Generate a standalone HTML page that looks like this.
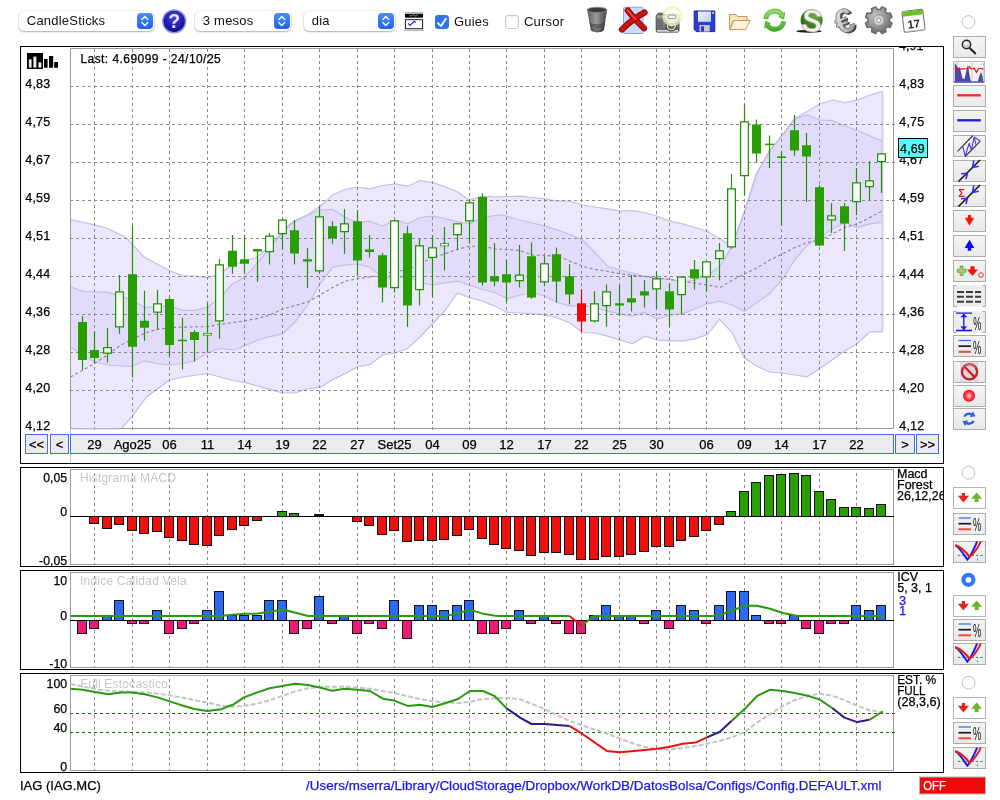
<!DOCTYPE html>
<html><head><meta charset="utf-8"><title>IAG (IAG.MC)</title>
<style>
html,body{margin:0;padding:0;background:#fff;}
body{width:1000px;height:800px;position:relative;overflow:hidden;font-family:'Liberation Sans', sans-serif;}
svg{position:absolute;left:0;top:0;}
body>svg,body>div{will-change:transform;}
.ax{font-family:'Liberation Sans', sans-serif;font-size:12.5px;fill:#000;stroke:#000;stroke-width:.25px;}
.ttl{font-family:'Liberation Sans', sans-serif;font-size:12px;fill:#c6c6c6;}
.sm{font-family:'Liberation Sans', sans-serif;font-size:12.3px;fill:#000;stroke:#000;stroke-width:.25px;}

.sel{position:absolute;top:11px;height:20px;background:#fff;border-radius:5px;box-shadow:0 0 0 .5px rgba(0,0,0,.12),0 1px 2px rgba(0,0,0,.28);font-size:13px;line-height:20px;color:#111;box-sizing:border-box;padding-left:7.8px;letter-spacing:.22px;white-space:nowrap}
.sel i{position:absolute;right:1.5px;top:2px;width:15.5px;height:16px;border-radius:4px;background:linear-gradient(#4a8cf8,#1e62ee)}
.sel i svg{position:absolute;left:0;top:0}
.lbl{position:absolute;top:13px;letter-spacing:.2px;font-size:13px;line-height:18px;color:#111;white-space:nowrap}
.cb{position:absolute;top:15px;width:14px;height:14px;border-radius:3.2px;box-sizing:border-box}
.cb.on{background:#2f73f6}
.cb.off{background:#fff;border:1px solid #c4c4c4;box-shadow:inset 0 1px 1px rgba(0,0,0,.06)}

</style></head><body>
<svg width="1000" height="800" viewBox="0 0 1000 800">
<rect x="20.5" y="46.5" width="923" height="417" fill="#fff" stroke="#000" stroke-width="1"/>
<defs><clipPath id="cp"><rect x="70" y="48" width="824" height="381"/></clipPath><clipPath id="cpanel"><rect x="21" y="47" width="922" height="416"/></clipPath><clipPath id="cpanel2"><rect x="21" y="467" width="922" height="320"/></clipPath></defs>
<g clip-path="url(#cp)">
<polygon points="70.5,219.5 94.5,224.8 108.0,228.5 126.0,237.5 144.0,257.0 157.0,264.0 169.5,270.5 183.0,275.8 195.0,276.0 207.5,277.7 220.0,273.6 232.5,265.0 240.0,262.5 256.2,257.5 265.0,250.0 273.8,241.2 282.5,232.5 290.0,223.8 297.5,219.4 307.5,215.0 320.0,206.2 327.5,200.0 332.5,195.0 345.0,189.5 357.5,187.0 370.0,188.8 382.5,185.5 395.0,183.8 407.5,186.2 420.0,180.5 432.5,182.5 444.5,186.5 457.0,191.5 469.5,200.0 482.5,196.2 495.0,197.0 507.0,196.5 520.0,196.2 532.0,197.5 545.0,198.8 557.5,201.2 570.0,201.2 582.5,205.0 595.0,207.0 607.5,208.8 620.0,211.2 632.0,210.5 645.0,212.5 657.5,216.2 670.0,221.2 682.5,223.8 695.0,227.5 707.5,231.2 719.5,238.8 732.0,246.0 744.6,211.0 756.3,173.9 769.0,151.6 781.7,135.6 794.5,118.8 807.5,111.2 820.0,103.8 832.5,100.0 845.0,102.5 857.5,100.0 870.0,95.0 882.5,91.2 882.5,331.8 870.0,331.8 857.0,343.8 844.5,351.2 832.0,360.0 819.5,368.8 807.0,376.8 794.5,375.0 782.0,373.0 769.5,372.0 757.0,366.2 744.5,358.0 732.0,332.5 719.5,319.2 707.5,334.5 695.0,338.8 682.5,340.8 670.0,340.8 657.5,340.0 645.0,336.2 632.5,343.8 620.0,340.0 607.5,336.2 595.0,333.0 582.5,332.5 570.0,323.0 557.5,318.0 545.0,315.0 532.5,313.8 520.0,313.0 507.5,312.5 495.0,306.2 482.5,301.2 469.5,297.5 457.5,293.0 444.5,311.0 432.4,324.0 420.0,337.0 407.6,348.6 395.0,353.0 382.4,355.0 370.0,364.6 358.0,366.6 345.0,373.6 332.0,380.0 320.0,387.4 307.0,389.0 295.0,393.0 282.4,393.0 270.0,389.4 257.0,386.0 245.0,382.4 232.5,380.5 220.0,377.0 207.0,373.5 183.0,377.0 169.5,380.0 147.0,396.5 132.0,416.6 121.5,428.5 70.5,428.5" fill="#ece7fd"/>
<polygon points="70.5,287.0 84.0,291.5 108.0,292.4 120.0,295.4 138.0,303.5 145.0,307.5 157.0,306.5 169.5,305.6 183.0,310.4 195.0,310.4 207.0,307.4 220.0,298.0 232.5,283.8 240.0,280.0 247.5,273.8 252.5,268.8 265.0,253.8 280.0,236.2 290.0,225.0 297.5,220.0 310.0,213.8 320.0,210.0 332.5,209.4 340.0,213.8 345.0,217.5 357.5,222.5 370.0,221.2 382.5,226.2 395.0,220.0 407.5,223.8 420.0,217.5 432.5,216.2 444.5,218.5 457.0,221.5 469.5,223.8 482.5,217.5 495.0,215.5 502.5,215.0 520.0,220.0 532.5,223.0 545.0,226.2 557.5,230.0 570.0,234.5 582.5,240.0 595.0,252.5 607.5,266.2 620.0,270.0 632.0,273.0 645.0,276.2 657.5,278.0 670.0,279.5 682.5,282.0 695.0,280.0 707.5,275.0 720.0,266.2 732.0,246.5 744.6,211.5 756.3,174.5 769.0,152.2 781.7,136.2 794.5,119.2 807.5,115.0 820.0,120.0 832.5,120.7 845.0,126.0 857.5,130.5 870.0,136.0 882.5,141.2 882.5,222.5 870.0,223.8 857.5,227.5 845.0,222.5 832.5,228.8 820.0,237.5 807.5,245.0 795.0,259.5 782.0,280.0 769.5,293.8 757.0,302.5 744.5,311.2 732.0,305.0 719.5,301.2 707.5,303.8 695.0,308.8 682.5,313.8 670.0,315.0 657.5,318.8 643.8,312.5 632.5,316.2 620.0,313.8 607.5,311.2 595.0,307.0 582.5,306.2 570.0,306.2 557.5,302.5 545.0,296.2 532.5,292.5 520.0,295.0 507.5,298.8 495.0,292.5 482.5,289.5 469.5,285.0 457.5,281.2 444.5,283.0 432.5,285.0 420.0,282.5 407.5,276.0 395.0,280.0 382.5,277.5 370.0,267.5 357.5,263.8 345.0,265.0 332.5,267.5 320.0,283.8 307.0,306.0 295.0,322.0 282.4,334.0 270.0,336.6 258.0,340.0 245.0,345.6 235.0,350.0 220.0,348.5 207.0,353.0 195.0,360.5 183.0,363.5 169.5,365.0 156.0,363.5 144.0,361.0 132.0,366.5 108.0,365.0 94.5,362.0 82.5,354.5 70.5,347.0" fill="#e3dbfb"/>
<polyline points="70.5,219.5 94.5,224.8 108.0,228.5 126.0,237.5 144.0,257.0 157.0,264.0 169.5,270.5 183.0,275.8 195.0,276.0 207.5,277.7 220.0,273.6 232.5,265.0 240.0,262.5 256.2,257.5 265.0,250.0 273.8,241.2 282.5,232.5 290.0,223.8 297.5,219.4 307.5,215.0 320.0,206.2 327.5,200.0 332.5,195.0 345.0,189.5 357.5,187.0 370.0,188.8 382.5,185.5 395.0,183.8 407.5,186.2 420.0,180.5 432.5,182.5 444.5,186.5 457.0,191.5 469.5,200.0 482.5,196.2 495.0,197.0 507.0,196.5 520.0,196.2 532.0,197.5 545.0,198.8 557.5,201.2 570.0,201.2 582.5,205.0 595.0,207.0 607.5,208.8 620.0,211.2 632.0,210.5 645.0,212.5 657.5,216.2 670.0,221.2 682.5,223.8 695.0,227.5 707.5,231.2 719.5,238.8 732.0,246.0 744.6,211.0 756.3,173.9 769.0,151.6 781.7,135.6 794.5,118.8 807.5,111.2 820.0,103.8 832.5,100.0 845.0,102.5 857.5,100.0 870.0,95.0 882.5,91.2" fill="none" stroke="#c3bce8" stroke-width="1.200"/>
<polyline points="70.5,428.5 121.5,428.5 132.0,416.6 147.0,396.5 169.5,380.0 183.0,377.0 207.0,373.5 220.0,377.0 232.5,380.5 245.0,382.4 257.0,386.0 270.0,389.4 282.4,393.0 295.0,393.0 307.0,389.0 320.0,387.4 332.0,380.0 345.0,373.6 358.0,366.6 370.0,364.6 382.4,355.0 395.0,353.0 407.6,348.6 420.0,337.0 432.4,324.0 444.5,311.0 457.5,293.0 469.5,297.5 482.5,301.2 495.0,306.2 507.5,312.5 520.0,313.0 532.5,313.8 545.0,315.0 557.5,318.0 570.0,323.0 582.5,332.5 595.0,333.0 607.5,336.2 620.0,340.0 632.5,343.8 645.0,336.2 657.5,340.0 670.0,340.8 682.5,340.8 695.0,338.8 707.5,334.5 719.5,319.2 732.0,332.5 744.5,358.0 757.0,366.2 769.5,372.0 782.0,373.0 794.5,375.0 807.0,376.8 819.5,368.8 832.0,360.0 844.5,351.2 857.0,343.8 870.0,331.8 882.5,331.8" fill="none" stroke="#c3bce8" stroke-width="1.200"/>
<polyline points="70.5,287.0 84.0,291.5 108.0,292.4 120.0,295.4 138.0,303.5 145.0,307.5 157.0,306.5 169.5,305.6 183.0,310.4 195.0,310.4 207.0,307.4 220.0,298.0 232.5,283.8 240.0,280.0 247.5,273.8 252.5,268.8 265.0,253.8 280.0,236.2 290.0,225.0 297.5,220.0 310.0,213.8 320.0,210.0 332.5,209.4 340.0,213.8 345.0,217.5 357.5,222.5 370.0,221.2 382.5,226.2 395.0,220.0 407.5,223.8 420.0,217.5 432.5,216.2 444.5,218.5 457.0,221.5 469.5,223.8 482.5,217.5 495.0,215.5 502.5,215.0 520.0,220.0 532.5,223.0 545.0,226.2 557.5,230.0 570.0,234.5 582.5,240.0 595.0,252.5 607.5,266.2 620.0,270.0 632.0,273.0 645.0,276.2 657.5,278.0 670.0,279.5 682.5,282.0 695.0,280.0 707.5,275.0 720.0,266.2 732.0,246.5 744.6,211.5 756.3,174.5 769.0,152.2 781.7,136.2 794.5,119.2 807.5,115.0 820.0,120.0 832.5,120.7 845.0,126.0 857.5,130.5 870.0,136.0 882.5,141.2" fill="none" stroke="#c3bce8" stroke-width="1.200"/>
<polyline points="70.5,347.0 82.5,354.5 94.5,362.0 108.0,365.0 132.0,366.5 144.0,361.0 156.0,363.5 169.5,365.0 183.0,363.5 195.0,360.5 207.0,353.0 220.0,348.5 235.0,350.0 245.0,345.6 258.0,340.0 270.0,336.6 282.4,334.0 295.0,322.0 307.0,306.0 320.0,283.8 332.5,267.5 345.0,265.0 357.5,263.8 370.0,267.5 382.5,277.5 395.0,280.0 407.5,276.0 420.0,282.5 432.5,285.0 444.5,283.0 457.5,281.2 469.5,285.0 482.5,289.5 495.0,292.5 507.5,298.8 520.0,295.0 532.5,292.5 545.0,296.2 557.5,302.5 570.0,306.2 582.5,306.2 595.0,307.0 607.5,311.2 620.0,313.8 632.5,316.2 643.8,312.5 657.5,318.8 670.0,315.0 682.5,313.8 695.0,308.8 707.5,303.8 719.5,301.2 732.0,305.0 744.5,311.2 757.0,302.5 769.5,293.8 782.0,280.0 795.0,259.5 807.5,245.0 820.0,237.5 832.5,228.8 845.0,222.5 857.5,227.5 870.0,223.8 882.5,222.5" fill="none" stroke="#c3bce8" stroke-width="1.200"/>
<line x1="882.500" y1="91.250" x2="882.500" y2="331.750" stroke="#d0caee" stroke-width="1.800"/>
</g>
<path d="M70 86.5H896M70 124.5H896M70 162.5H896M70 200.5H896M70 238.5H896M70 276.5H896M70 314.5H896M70 352.5H896M70 390.5H896M94.5 49V430.5M132.5 49V430.5M169.5 49V430.5M207.5 49V430.5M244.5 49V430.5M282.5 49V430.5M319.5 49V430.5M357.5 49V430.5M394.5 49V430.5M432.5 49V430.5M469.5 49V430.5M506.5 49V430.5M544.5 49V430.5M581.5 49V430.5M619.5 49V430.5M656.5 49V430.5M669.5 49V430.5M706.5 49V430.5M744.5 49V430.5M781.5 49V430.5M819.5 49V430.5M856.5 49V430.5" stroke="#8a8a8a" stroke-width="1" stroke-dasharray="3 3" fill="none"/>
<polyline points="70.5,377.0 94.5,363.5 108.0,354.5 120.0,345.5 132.0,339.5 144.0,333.5 156.0,329.6 169.5,327.5 207.0,326.6 220.0,324.5 240.0,321.6 257.0,318.6 270.0,315.0 282.4,309.0 295.0,305.6 307.5,302.0 320.0,295.0 332.5,287.5 345.0,281.2 357.5,278.8 375.0,276.2 395.0,271.2 407.5,270.0 420.0,263.8 432.5,257.5 444.5,254.0 455.0,250.0 469.5,246.2 482.5,246.2 494.5,248.8 520.0,250.5 532.5,255.0 545.0,255.5 557.5,256.2 570.0,261.2 582.5,266.2 595.0,269.5 607.5,271.2 620.0,273.8 632.0,275.2 657.5,278.0 682.5,281.2 707.5,285.0 720.0,287.5 732.5,280.0 745.0,273.8 757.5,267.5 770.0,260.0 782.5,253.8 795.0,247.5 807.5,242.5 820.0,240.0 832.5,233.8 845.0,227.5 857.5,223.8 870.0,217.5 882.5,210.5" fill="none" stroke="#8a8494" stroke-width="1.1" stroke-dasharray="3 2.5" clip-path="url(#cp)"/>
<line x1="70.5" y1="219" x2="70.5" y2="463" stroke="#c4bdf0" stroke-width="1"/>
<path d="M70.5 429V48.5H893.5V428.5H70.5" fill="none" stroke="#9a9a9a" stroke-width="1"/>
<path d="M71 428.8H120.500" stroke="#c4bdf0" stroke-width="1.300"/>
<line x1="82.5" y1="316.2" x2="82.5" y2="370.0" stroke="#1f9405" stroke-width="1.2"/>
<rect x="78.0" y="322.00" width="9" height="38.00" fill="#289e00"/>
<line x1="94.5" y1="331.2" x2="94.5" y2="363.0" stroke="#1f9405" stroke-width="1.2"/>
<rect x="90.0" y="350.00" width="9" height="8.00" fill="#289e00"/>
<line x1="107.5" y1="328.0" x2="107.5" y2="362.5" stroke="#1f9405" stroke-width="1.2"/>
<rect x="103.0" y="347.00" width="9" height="6.75" fill="#1f9405"/>
<rect x="104.25" y="348.25" width="6.50" height="4.25" fill="#fff"/>
<line x1="119.5" y1="275.0" x2="119.5" y2="333.8" stroke="#1f9405" stroke-width="1.2"/>
<rect x="115.0" y="291.25" width="9" height="36.25" fill="#1f9405"/>
<rect x="116.25" y="292.50" width="6.50" height="33.75" fill="#fff"/>
<line x1="132.5" y1="225.8" x2="132.5" y2="377.5" stroke="#1f9405" stroke-width="1.2"/>
<rect x="128.0" y="274.25" width="9" height="72.50" fill="#289e00"/>
<line x1="144.5" y1="290.8" x2="144.5" y2="340.8" stroke="#1f9405" stroke-width="1.2"/>
<rect x="140.0" y="320.75" width="9" height="7.00" fill="#289e00"/>
<line x1="157.5" y1="290.0" x2="157.5" y2="330.0" stroke="#1f9405" stroke-width="1.2"/>
<rect x="153.0" y="303.25" width="9" height="9.50" fill="#1f9405"/>
<rect x="154.25" y="304.50" width="6.50" height="7.00" fill="#fff"/>
<line x1="169.5" y1="298.0" x2="169.5" y2="356.2" stroke="#1f9405" stroke-width="1.2"/>
<rect x="165.0" y="299.00" width="9" height="46.00" fill="#289e00"/>
<line x1="182.5" y1="318.0" x2="182.5" y2="369.5" stroke="#1f9405" stroke-width="1.2"/>
<rect x="178.0" y="339.75" width="9" height="1.50" fill="#289e00"/>
<line x1="194.5" y1="330.0" x2="194.5" y2="361.8" stroke="#1f9405" stroke-width="1.2"/>
<rect x="190.0" y="332.00" width="9" height="8.00" fill="#289e00"/>
<line x1="207.5" y1="303.0" x2="207.5" y2="352.5" stroke="#1f9405" stroke-width="1.2"/>
<rect x="203.0" y="333.00" width="9" height="2.50" fill="#1f9405"/>
<rect x="203.75" y="333.75" width="7.50" height="1.00" fill="#fff"/>
<line x1="219.5" y1="259.2" x2="219.5" y2="338.8" stroke="#1f9405" stroke-width="1.2"/>
<rect x="215.0" y="264.25" width="9" height="57.25" fill="#1f9405"/>
<rect x="216.25" y="265.50" width="6.50" height="54.75" fill="#fff"/>
<line x1="232.5" y1="235.0" x2="232.5" y2="273.8" stroke="#1f9405" stroke-width="1.2"/>
<rect x="228.0" y="250.75" width="9" height="16.00" fill="#289e00"/>
<line x1="244.5" y1="235.0" x2="244.5" y2="273.8" stroke="#1f9405" stroke-width="1.2"/>
<rect x="240.0" y="259.25" width="9" height="4.50" fill="#289e00"/>
<line x1="257.5" y1="249.0" x2="257.5" y2="281.8" stroke="#1f9405" stroke-width="1.2"/>
<rect x="253.0" y="249.00" width="9" height="2.50" fill="#289e00"/>
<line x1="269.5" y1="233.0" x2="269.5" y2="264.5" stroke="#1f9405" stroke-width="1.2"/>
<rect x="265.0" y="235.50" width="9" height="16.75" fill="#1f9405"/>
<rect x="266.25" y="236.75" width="6.50" height="14.25" fill="#fff"/>
<line x1="282.5" y1="219.0" x2="282.5" y2="249.5" stroke="#1f9405" stroke-width="1.2"/>
<rect x="278.0" y="219.50" width="9" height="14.75" fill="#1f9405"/>
<rect x="279.25" y="220.75" width="6.50" height="12.25" fill="#fff"/>
<line x1="294.5" y1="220.0" x2="294.5" y2="264.5" stroke="#1f9405" stroke-width="1.2"/>
<rect x="290.0" y="230.25" width="9" height="23.25" fill="#289e00"/>
<line x1="307.5" y1="248.0" x2="307.5" y2="288.2" stroke="#1f9405" stroke-width="1.2"/>
<rect x="303.0" y="259.25" width="9" height="2.25" fill="#289e00"/>
<line x1="319.5" y1="206.2" x2="319.5" y2="273.0" stroke="#1f9405" stroke-width="1.2"/>
<rect x="315.0" y="216.25" width="9" height="55.25" fill="#1f9405"/>
<rect x="316.25" y="217.50" width="6.50" height="52.75" fill="#fff"/>
<line x1="332.5" y1="221.2" x2="332.5" y2="243.8" stroke="#1f9405" stroke-width="1.2"/>
<rect x="328.0" y="226.25" width="9" height="12.00" fill="#289e00"/>
<line x1="344.5" y1="209.2" x2="344.5" y2="253.8" stroke="#1f9405" stroke-width="1.2"/>
<rect x="340.0" y="223.25" width="9" height="9.00" fill="#1f9405"/>
<rect x="341.25" y="224.50" width="6.50" height="6.50" fill="#fff"/>
<line x1="357.5" y1="210.0" x2="357.5" y2="275.8" stroke="#1f9405" stroke-width="1.2"/>
<rect x="353.0" y="221.25" width="9" height="39.25" fill="#289e00"/>
<line x1="369.5" y1="235.0" x2="369.5" y2="257.5" stroke="#1f9405" stroke-width="1.2"/>
<rect x="365.0" y="249.40" width="9" height="2.60" fill="#289e00"/>
<line x1="382.5" y1="253.0" x2="382.5" y2="302.5" stroke="#1f9405" stroke-width="1.2"/>
<rect x="378.0" y="255.25" width="9" height="32.25" fill="#289e00"/>
<line x1="394.5" y1="220.0" x2="394.5" y2="292.5" stroke="#1f9405" stroke-width="1.2"/>
<rect x="390.0" y="220.25" width="9" height="68.00" fill="#1f9405"/>
<rect x="391.25" y="221.50" width="6.50" height="65.50" fill="#fff"/>
<line x1="407.5" y1="226.2" x2="407.5" y2="326.8" stroke="#1f9405" stroke-width="1.2"/>
<rect x="403.0" y="233.25" width="9" height="72.25" fill="#289e00"/>
<line x1="419.5" y1="238.8" x2="419.5" y2="305.5" stroke="#1f9405" stroke-width="1.2"/>
<rect x="415.0" y="245.25" width="9" height="45.00" fill="#1f9405"/>
<rect x="416.25" y="246.50" width="6.50" height="42.50" fill="#fff"/>
<line x1="432.5" y1="235.5" x2="432.5" y2="297.5" stroke="#1f9405" stroke-width="1.2"/>
<rect x="428.0" y="247.25" width="9" height="10.75" fill="#1f9405"/>
<rect x="429.25" y="248.50" width="6.50" height="8.25" fill="#fff"/>
<line x1="444.5" y1="227.0" x2="444.5" y2="270.5" stroke="#1f9405" stroke-width="1.2"/>
<rect x="440.0" y="243.25" width="9" height="3.00" fill="#1f9405"/>
<rect x="440.75" y="244.00" width="7.50" height="1.50" fill="#fff"/>
<line x1="457.5" y1="223.0" x2="457.5" y2="250.0" stroke="#1f9405" stroke-width="1.2"/>
<rect x="453.0" y="223.25" width="9" height="12.00" fill="#1f9405"/>
<rect x="454.25" y="224.50" width="6.50" height="9.50" fill="#fff"/>
<line x1="469.5" y1="199.5" x2="469.5" y2="242.5" stroke="#1f9405" stroke-width="1.2"/>
<rect x="465.0" y="202.25" width="9" height="19.25" fill="#1f9405"/>
<rect x="466.25" y="203.50" width="6.50" height="16.75" fill="#fff"/>
<line x1="482.5" y1="193.2" x2="482.5" y2="285.5" stroke="#1f9405" stroke-width="1.2"/>
<rect x="478.0" y="197.00" width="9" height="85.50" fill="#289e00"/>
<line x1="494.5" y1="243.0" x2="494.5" y2="286.2" stroke="#1f9405" stroke-width="1.2"/>
<rect x="490.0" y="276.25" width="9" height="5.25" fill="#289e00"/>
<line x1="506.5" y1="260.0" x2="506.5" y2="302.0" stroke="#1f9405" stroke-width="1.2"/>
<rect x="502.0" y="274.25" width="9" height="8.25" fill="#289e00"/>
<line x1="519.5" y1="245.0" x2="519.5" y2="287.5" stroke="#1f9405" stroke-width="1.2"/>
<rect x="515.0" y="274.50" width="9" height="6.75" fill="#1f9405"/>
<rect x="516.25" y="275.75" width="6.50" height="4.25" fill="#fff"/>
<line x1="531.5" y1="242.5" x2="531.5" y2="298.8" stroke="#1f9405" stroke-width="1.2"/>
<rect x="527.0" y="256.25" width="9" height="41.25" fill="#289e00"/>
<line x1="544.5" y1="256.2" x2="544.5" y2="286.2" stroke="#1f9405" stroke-width="1.2"/>
<rect x="540.0" y="263.25" width="9" height="19.25" fill="#1f9405"/>
<rect x="541.25" y="264.50" width="6.50" height="16.75" fill="#fff"/>
<line x1="556.5" y1="247.5" x2="556.5" y2="302.5" stroke="#1f9405" stroke-width="1.2"/>
<rect x="552.0" y="254.25" width="9" height="27.25" fill="#289e00"/>
<line x1="569.5" y1="264.2" x2="569.5" y2="304.5" stroke="#1f9405" stroke-width="1.2"/>
<rect x="565.0" y="276.25" width="9" height="18.25" fill="#289e00"/>
<line x1="581.5" y1="289.5" x2="581.5" y2="332.0" stroke="#e00000" stroke-width="1.2"/>
<rect x="577.0" y="303.25" width="9" height="18.25" fill="#ee0a0a"/>
<line x1="594.5" y1="291.2" x2="594.5" y2="322.5" stroke="#1f9405" stroke-width="1.2"/>
<rect x="590.0" y="303.25" width="9" height="18.25" fill="#1f9405"/>
<rect x="591.25" y="304.50" width="6.50" height="15.75" fill="#fff"/>
<line x1="606.5" y1="284.5" x2="606.5" y2="326.8" stroke="#1f9405" stroke-width="1.2"/>
<rect x="602.0" y="291.25" width="9" height="15.00" fill="#1f9405"/>
<rect x="603.25" y="292.50" width="6.50" height="12.50" fill="#fff"/>
<line x1="619.5" y1="285.0" x2="619.5" y2="316.2" stroke="#1f9405" stroke-width="1.2"/>
<rect x="615.0" y="303.25" width="9" height="2.25" fill="#289e00"/>
<line x1="631.5" y1="275.0" x2="631.5" y2="311.5" stroke="#1f9405" stroke-width="1.2"/>
<rect x="627.0" y="298.25" width="9" height="4.25" fill="#289e00"/>
<line x1="644.5" y1="280.0" x2="644.5" y2="307.5" stroke="#1f9405" stroke-width="1.2"/>
<rect x="640.0" y="291.25" width="9" height="4.25" fill="#289e00"/>
<line x1="656.5" y1="271.2" x2="656.5" y2="308.8" stroke="#1f9405" stroke-width="1.2"/>
<rect x="652.0" y="278.25" width="9" height="11.25" fill="#1f9405"/>
<rect x="653.25" y="279.50" width="6.50" height="8.75" fill="#fff"/>
<line x1="669.5" y1="283.0" x2="669.5" y2="327.0" stroke="#1f9405" stroke-width="1.2"/>
<rect x="665.0" y="291.25" width="9" height="18.25" fill="#289e00"/>
<line x1="681.5" y1="276.0" x2="681.5" y2="314.5" stroke="#1f9405" stroke-width="1.2"/>
<rect x="677.0" y="276.50" width="9" height="18.75" fill="#1f9405"/>
<rect x="678.25" y="277.75" width="6.50" height="16.25" fill="#fff"/>
<line x1="694.5" y1="260.0" x2="694.5" y2="289.5" stroke="#1f9405" stroke-width="1.2"/>
<rect x="690.0" y="269.25" width="9" height="9.25" fill="#289e00"/>
<line x1="706.5" y1="261.0" x2="706.5" y2="291.8" stroke="#1f9405" stroke-width="1.2"/>
<rect x="702.0" y="261.25" width="9" height="16.25" fill="#1f9405"/>
<rect x="703.25" y="262.50" width="6.50" height="13.75" fill="#fff"/>
<line x1="719.5" y1="243.0" x2="719.5" y2="280.5" stroke="#1f9405" stroke-width="1.2"/>
<rect x="715.0" y="250.25" width="9" height="9.00" fill="#1f9405"/>
<rect x="716.25" y="251.50" width="6.50" height="6.50" fill="#fff"/>
<line x1="731.5" y1="173.8" x2="731.5" y2="248.8" stroke="#1f9405" stroke-width="1.2"/>
<rect x="727.0" y="188.25" width="9" height="59.25" fill="#1f9405"/>
<rect x="728.25" y="189.50" width="6.50" height="56.75" fill="#fff"/>
<line x1="744.5" y1="104.5" x2="744.5" y2="195.5" stroke="#1f9405" stroke-width="1.2"/>
<rect x="740.0" y="121.25" width="9" height="55.00" fill="#1f9405"/>
<rect x="741.25" y="122.50" width="6.50" height="52.50" fill="#fff"/>
<line x1="756.5" y1="119.5" x2="756.5" y2="162.5" stroke="#1f9405" stroke-width="1.2"/>
<rect x="752.0" y="124.50" width="9" height="29.00" fill="#289e00"/>
<line x1="769.5" y1="135.5" x2="769.5" y2="168.0" stroke="#1f9405" stroke-width="1.2"/>
<rect x="765.0" y="143.60" width="9" height="1.60" fill="#289e00"/>
<line x1="781.5" y1="151.2" x2="781.5" y2="225.5" stroke="#1f9405" stroke-width="1.2"/>
<rect x="777.0" y="156.40" width="9" height="1.60" fill="#289e00"/>
<line x1="794.5" y1="115.0" x2="794.5" y2="155.8" stroke="#1f9405" stroke-width="1.2"/>
<rect x="790.0" y="130.25" width="9" height="20.25" fill="#289e00"/>
<line x1="806.5" y1="133.0" x2="806.5" y2="202.0" stroke="#1f9405" stroke-width="1.2"/>
<rect x="802.0" y="145.25" width="9" height="11.25" fill="#289e00"/>
<line x1="819.5" y1="185.0" x2="819.5" y2="246.0" stroke="#1f9405" stroke-width="1.2"/>
<rect x="815.0" y="187.25" width="9" height="58.25" fill="#289e00"/>
<line x1="831.5" y1="203.2" x2="831.5" y2="233.0" stroke="#1f9405" stroke-width="1.2"/>
<rect x="827.0" y="215.25" width="9" height="5.25" fill="#1f9405"/>
<rect x="828.25" y="216.50" width="6.50" height="2.75" fill="#fff"/>
<line x1="844.5" y1="203.0" x2="844.5" y2="251.0" stroke="#1f9405" stroke-width="1.2"/>
<rect x="840.0" y="206.25" width="9" height="17.25" fill="#289e00"/>
<line x1="856.5" y1="168.0" x2="856.5" y2="215.0" stroke="#1f9405" stroke-width="1.2"/>
<rect x="852.0" y="182.25" width="9" height="20.00" fill="#1f9405"/>
<rect x="853.25" y="183.50" width="6.50" height="17.50" fill="#fff"/>
<line x1="869.5" y1="161.2" x2="869.5" y2="200.5" stroke="#1f9405" stroke-width="1.2"/>
<rect x="865.0" y="180.25" width="9" height="7.00" fill="#1f9405"/>
<rect x="866.25" y="181.50" width="6.50" height="4.50" fill="#fff"/>
<line x1="881.5" y1="153.0" x2="881.5" y2="193.0" stroke="#1f9405" stroke-width="1.2"/>
<rect x="877.0" y="153.25" width="9" height="9.00" fill="#1f9405"/>
<rect x="878.25" y="154.50" width="6.50" height="6.50" fill="#fff"/>
<text x="25.200" y="88.3" class="ax" style="letter-spacing:.25px">4,83</text>
<text x="899.200" y="88.3" class="ax" style="letter-spacing:.25px">4,83</text>
<text x="25.200" y="126.3" class="ax" style="letter-spacing:.25px">4,75</text>
<text x="899.200" y="126.3" class="ax" style="letter-spacing:.25px">4,75</text>
<text x="25.200" y="164.3" class="ax" style="letter-spacing:.25px">4,67</text>
<text x="899.200" y="164.3" class="ax" style="letter-spacing:.25px">4,67</text>
<text x="25.200" y="202.3" class="ax" style="letter-spacing:.25px">4,59</text>
<text x="899.200" y="202.3" class="ax" style="letter-spacing:.25px">4,59</text>
<text x="25.200" y="240.3" class="ax" style="letter-spacing:.25px">4,51</text>
<text x="899.200" y="240.3" class="ax" style="letter-spacing:.25px">4,51</text>
<text x="25.200" y="278.3" class="ax" style="letter-spacing:.25px">4,44</text>
<text x="899.200" y="278.3" class="ax" style="letter-spacing:.25px">4,44</text>
<text x="25.200" y="316.3" class="ax" style="letter-spacing:.25px">4,36</text>
<text x="899.200" y="316.3" class="ax" style="letter-spacing:.25px">4,36</text>
<text x="25.200" y="354.3" class="ax" style="letter-spacing:.25px">4,28</text>
<text x="899.200" y="354.3" class="ax" style="letter-spacing:.25px">4,28</text>
<text x="25.200" y="392.3" class="ax" style="letter-spacing:.25px">4,20</text>
<text x="899.200" y="392.3" class="ax" style="letter-spacing:.25px">4,20</text>
<text x="25.200" y="430.3" class="ax" style="letter-spacing:.25px">4,12</text>
<text x="899.200" y="430.3" class="ax" style="letter-spacing:.25px">4,12</text>
<text x="899" y="50.3" class="ax" clip-path="url(#cpanel)">4,91</text>
<rect x="898.5" y="138.5" width="29" height="19" fill="#4dfefa" stroke="#000" stroke-width="1"/>
<text x="900.1" y="152.9" class="ax" style="font-size:12.4px" textLength="24.6" lengthAdjust="spacing">4,69</text>
<text x="80.4" y="62.8" class="ax" style="font-size:12px" textLength="140.3" lengthAdjust="spacing">Last: 4.69099 - 24/10/25</text>
<rect x="27" y="53" width="16" height="16" fill="#000"/>
<path d="M29 59.5h2.4v8h-2.4zM33.6 56.8h2.6v10.7h-2.6zM38.6 62.6h2.6v4.9h-2.6z" fill="#fff" stroke="#999" stroke-width=".6"/>
<path d="M44 59h3.6v8.8H44zM49 56h4.2v11.8H49zM54.2 62h3.8v5.8h-3.8z" fill="#000"/>
<rect x="25.5" y="434.5" width="22.0" height="19" fill="#ebebf0" stroke="#3b6fe6" stroke-width="1"/>
<text x="36.5" y="449" class="ax" text-anchor="middle" style="font-size:13px">&lt;&lt;</text>
<rect x="50.5" y="434.5" width="18.0" height="19" fill="#ebebf0" stroke="#3b6fe6" stroke-width="1"/>
<text x="59.5" y="449" class="ax" text-anchor="middle" style="font-size:13px">&lt;</text>
<rect x="70.5" y="434.5" width="823.0" height="19" fill="#ebebf0" stroke="#3b6fe6" stroke-width="1"/>
<rect x="895.5" y="434.5" width="19.0" height="19" fill="#ebebf0" stroke="#3b6fe6" stroke-width="1"/>
<text x="905.0" y="449" class="ax" text-anchor="middle" style="font-size:13px">&gt;</text>
<rect x="916.5" y="434.5" width="22.0" height="19" fill="#ebebf0" stroke="#3b6fe6" stroke-width="1"/>
<text x="927.5" y="449" class="ax" text-anchor="middle" style="font-size:13px">&gt;&gt;</text>
<text x="94.5" y="449" class="ax" text-anchor="middle" style="font-size:13px">29</text>
<text x="132.5" y="449" class="ax" text-anchor="middle" style="font-size:13px">Ago25</text>
<text x="169.5" y="449" class="ax" text-anchor="middle" style="font-size:13px">06</text>
<text x="207.5" y="449" class="ax" text-anchor="middle" style="font-size:13px">11</text>
<text x="244.5" y="449" class="ax" text-anchor="middle" style="font-size:13px">14</text>
<text x="282.5" y="449" class="ax" text-anchor="middle" style="font-size:13px">19</text>
<text x="319.5" y="449" class="ax" text-anchor="middle" style="font-size:13px">22</text>
<text x="357.5" y="449" class="ax" text-anchor="middle" style="font-size:13px">27</text>
<text x="394.5" y="449" class="ax" text-anchor="middle" style="font-size:13px">Set25</text>
<text x="432.5" y="449" class="ax" text-anchor="middle" style="font-size:13px">04</text>
<text x="469.5" y="449" class="ax" text-anchor="middle" style="font-size:13px">09</text>
<text x="506.5" y="449" class="ax" text-anchor="middle" style="font-size:13px">12</text>
<text x="544.5" y="449" class="ax" text-anchor="middle" style="font-size:13px">17</text>
<text x="581.5" y="449" class="ax" text-anchor="middle" style="font-size:13px">22</text>
<text x="619.5" y="449" class="ax" text-anchor="middle" style="font-size:13px">25</text>
<text x="656.5" y="449" class="ax" text-anchor="middle" style="font-size:13px">30</text>
<text x="706.5" y="449" class="ax" text-anchor="middle" style="font-size:13px">06</text>
<text x="744.5" y="449" class="ax" text-anchor="middle" style="font-size:13px">09</text>
<text x="781.5" y="449" class="ax" text-anchor="middle" style="font-size:13px">14</text>
<text x="819.5" y="449" class="ax" text-anchor="middle" style="font-size:13px">17</text>
<text x="856.5" y="449" class="ax" text-anchor="middle" style="font-size:13px">22</text>
<rect x="20.5" y="467.5" width="923" height="99.0" fill="#fff" stroke="#000" stroke-width="1"/>
<rect x="70.5" y="469.5" width="823" height="95.0" fill="#fff" stroke="#9a9a9a" stroke-width="1"/>
<path d="M94.5 470.0V565.0M132.5 470.0V565.0M169.5 470.0V565.0M207.5 470.0V565.0M244.5 470.0V565.0M282.5 470.0V565.0M319.5 470.0V565.0M357.5 470.0V565.0M394.5 470.0V565.0M432.5 470.0V565.0M469.5 470.0V565.0M506.5 470.0V565.0M544.5 470.0V565.0M581.5 470.0V565.0M619.5 470.0V565.0M656.5 470.0V565.0M669.5 470.0V565.0M706.5 470.0V565.0M744.5 470.0V565.0M781.5 470.0V565.0M819.5 470.0V565.0M856.5 470.0V565.0" stroke="#8a8a8a" stroke-width="1" stroke-dasharray="3 3" stroke-dashoffset="3" fill="none"/>
<rect x="89.5" y="516.5" width="9" height="7.0" fill="#ee100c" stroke="#111" stroke-width="1"/>
<rect x="102.5" y="516.5" width="9" height="12.0" fill="#ee100c" stroke="#111" stroke-width="1"/>
<rect x="114.5" y="516.5" width="9" height="8.0" fill="#ee100c" stroke="#111" stroke-width="1"/>
<rect x="127.5" y="516.5" width="9" height="14.0" fill="#ee100c" stroke="#111" stroke-width="1"/>
<rect x="139.5" y="516.5" width="9" height="17.0" fill="#ee100c" stroke="#111" stroke-width="1"/>
<rect x="152.5" y="516.5" width="9" height="15.0" fill="#ee100c" stroke="#111" stroke-width="1"/>
<rect x="164.5" y="516.5" width="9" height="21.0" fill="#ee100c" stroke="#111" stroke-width="1"/>
<rect x="177.5" y="516.5" width="9" height="24.0" fill="#ee100c" stroke="#111" stroke-width="1"/>
<rect x="189.5" y="516.5" width="9" height="28.0" fill="#ee100c" stroke="#111" stroke-width="1"/>
<rect x="202.5" y="516.5" width="9" height="29.0" fill="#ee100c" stroke="#111" stroke-width="1"/>
<rect x="214.5" y="516.5" width="9" height="19.0" fill="#ee100c" stroke="#111" stroke-width="1"/>
<rect x="227.5" y="516.5" width="9" height="13.0" fill="#ee100c" stroke="#111" stroke-width="1"/>
<rect x="239.5" y="516.5" width="9" height="9.0" fill="#ee100c" stroke="#111" stroke-width="1"/>
<rect x="252.5" y="516.5" width="9" height="4.0" fill="#ee100c" stroke="#111" stroke-width="1"/>
<rect x="277.5" y="511.5" width="9" height="5.0" fill="#289e00" stroke="#111" stroke-width="1"/>
<rect x="289.5" y="513.5" width="9" height="3.0" fill="#289e00" stroke="#111" stroke-width="1"/>
<rect x="314.5" y="514.5" width="9" height="2.0" fill="#111" stroke="#111" stroke-width="1"/>
<rect x="352.5" y="516.5" width="9" height="5.0" fill="#ee100c" stroke="#111" stroke-width="1"/>
<rect x="364.5" y="516.5" width="9" height="9.0" fill="#ee100c" stroke="#111" stroke-width="1"/>
<rect x="377.5" y="516.5" width="9" height="18.0" fill="#ee100c" stroke="#111" stroke-width="1"/>
<rect x="389.5" y="516.5" width="9" height="14.0" fill="#ee100c" stroke="#111" stroke-width="1"/>
<rect x="402.5" y="516.5" width="9" height="25.0" fill="#ee100c" stroke="#111" stroke-width="1"/>
<rect x="414.5" y="516.5" width="9" height="24.0" fill="#ee100c" stroke="#111" stroke-width="1"/>
<rect x="427.5" y="516.5" width="9" height="24.0" fill="#ee100c" stroke="#111" stroke-width="1"/>
<rect x="439.5" y="516.5" width="9" height="23.0" fill="#ee100c" stroke="#111" stroke-width="1"/>
<rect x="452.5" y="516.5" width="9" height="19.0" fill="#ee100c" stroke="#111" stroke-width="1"/>
<rect x="464.5" y="516.5" width="9" height="13.0" fill="#ee100c" stroke="#111" stroke-width="1"/>
<rect x="477.5" y="516.5" width="9" height="22.0" fill="#ee100c" stroke="#111" stroke-width="1"/>
<rect x="489.5" y="516.5" width="9" height="28.0" fill="#ee100c" stroke="#111" stroke-width="1"/>
<rect x="501.5" y="516.5" width="9" height="32.0" fill="#ee100c" stroke="#111" stroke-width="1"/>
<rect x="514.5" y="516.5" width="9" height="34.0" fill="#ee100c" stroke="#111" stroke-width="1"/>
<rect x="526.5" y="516.5" width="9" height="39.0" fill="#ee100c" stroke="#111" stroke-width="1"/>
<rect x="539.5" y="516.5" width="9" height="36.0" fill="#ee100c" stroke="#111" stroke-width="1"/>
<rect x="551.5" y="516.5" width="9" height="36.0" fill="#ee100c" stroke="#111" stroke-width="1"/>
<rect x="564.5" y="516.5" width="9" height="38.0" fill="#ee100c" stroke="#111" stroke-width="1"/>
<rect x="576.5" y="516.5" width="9" height="43.0" fill="#ee100c" stroke="#111" stroke-width="1"/>
<rect x="589.5" y="516.5" width="9" height="43.0" fill="#ee100c" stroke="#111" stroke-width="1"/>
<rect x="601.5" y="516.5" width="9" height="40.0" fill="#ee100c" stroke="#111" stroke-width="1"/>
<rect x="614.5" y="516.5" width="9" height="40.0" fill="#ee100c" stroke="#111" stroke-width="1"/>
<rect x="626.5" y="516.5" width="9" height="38.0" fill="#ee100c" stroke="#111" stroke-width="1"/>
<rect x="639.5" y="516.5" width="9" height="35.0" fill="#ee100c" stroke="#111" stroke-width="1"/>
<rect x="651.5" y="516.5" width="9" height="30.0" fill="#ee100c" stroke="#111" stroke-width="1"/>
<rect x="664.5" y="516.5" width="9" height="30.0" fill="#ee100c" stroke="#111" stroke-width="1"/>
<rect x="676.5" y="516.5" width="9" height="24.0" fill="#ee100c" stroke="#111" stroke-width="1"/>
<rect x="689.5" y="516.5" width="9" height="20.0" fill="#ee100c" stroke="#111" stroke-width="1"/>
<rect x="701.5" y="516.5" width="9" height="14.0" fill="#ee100c" stroke="#111" stroke-width="1"/>
<rect x="714.5" y="516.5" width="9" height="8.0" fill="#ee100c" stroke="#111" stroke-width="1"/>
<rect x="726.5" y="511.5" width="9" height="5.0" fill="#289e00" stroke="#111" stroke-width="1"/>
<rect x="739.5" y="491.5" width="9" height="25.0" fill="#289e00" stroke="#111" stroke-width="1"/>
<rect x="751.5" y="482.5" width="9" height="34.0" fill="#289e00" stroke="#111" stroke-width="1"/>
<rect x="764.5" y="475.5" width="9" height="41.0" fill="#289e00" stroke="#111" stroke-width="1"/>
<rect x="776.5" y="474.5" width="9" height="42.0" fill="#289e00" stroke="#111" stroke-width="1"/>
<rect x="789.5" y="473.5" width="9" height="43.0" fill="#289e00" stroke="#111" stroke-width="1"/>
<rect x="801.5" y="475.5" width="9" height="41.0" fill="#289e00" stroke="#111" stroke-width="1"/>
<rect x="814.5" y="491.5" width="9" height="25.0" fill="#289e00" stroke="#111" stroke-width="1"/>
<rect x="826.5" y="499.5" width="9" height="17.0" fill="#289e00" stroke="#111" stroke-width="1"/>
<rect x="839.5" y="507.5" width="9" height="9.0" fill="#289e00" stroke="#111" stroke-width="1"/>
<rect x="851.5" y="507.5" width="9" height="9.0" fill="#289e00" stroke="#111" stroke-width="1"/>
<rect x="864.5" y="508.5" width="9" height="8.0" fill="#289e00" stroke="#111" stroke-width="1"/>
<rect x="876.5" y="504.5" width="9" height="12.0" fill="#289e00" stroke="#111" stroke-width="1"/>
<line x1="70" y1="516.5" x2="894" y2="516.5" stroke="#000" stroke-width="1"/>
<text x="80" y="482" class="ttl" textLength="96" lengthAdjust="spacing">Histgrama MACD</text>
<text x="67.1" y="482" class="sm" text-anchor="end">0,05</text>
<text x="67.1" y="516" class="sm" text-anchor="end">0</text>
<text x="67.1" y="565.4" class="sm" text-anchor="end">-0,05</text>
<text x="897" y="478.0" class="ax" style="font-size:12.5px" clip-path="url(#cpanel2)">Macd</text>
<text x="897" y="489.0" class="ax" style="font-size:12.5px" clip-path="url(#cpanel2)">Forest</text>
<text x="897" y="500.0" class="ax" style="font-size:12.5px" clip-path="url(#cpanel2)">26,12,26</text>
<rect x="20.5" y="570.5" width="923" height="99.0" fill="#fff" stroke="#000" stroke-width="1"/>
<rect x="70.5" y="572.5" width="823" height="95.0" fill="#fff" stroke="#9a9a9a" stroke-width="1"/>
<path d="M94.5 573.0V668.0M132.5 573.0V668.0M169.5 573.0V668.0M207.5 573.0V668.0M244.5 573.0V668.0M282.5 573.0V668.0M319.5 573.0V668.0M357.5 573.0V668.0M394.5 573.0V668.0M432.5 573.0V668.0M469.5 573.0V668.0M506.5 573.0V668.0M544.5 573.0V668.0M581.5 573.0V668.0M619.5 573.0V668.0M656.5 573.0V668.0M669.5 573.0V668.0M706.5 573.0V668.0M744.5 573.0V668.0M781.5 573.0V668.0M819.5 573.0V668.0M856.5 573.0V668.0" stroke="#8a8a8a" stroke-width="1" stroke-dasharray="3 3" stroke-dashoffset="3" fill="none"/>
<rect x="77.5" y="620.5" width="9" height="13.0" fill="#ee1a78" stroke="#111" stroke-width="1"/>
<rect x="89.5" y="620.5" width="9" height="8.0" fill="#ee1a78" stroke="#111" stroke-width="1"/>
<rect x="102.5" y="615.5" width="9" height="5.0" fill="#2a6af5" stroke="#111" stroke-width="1"/>
<rect x="114.5" y="600.5" width="9" height="20.0" fill="#2a6af5" stroke="#111" stroke-width="1"/>
<rect x="127.5" y="620.5" width="9" height="3.0" fill="#ee1a78" stroke="#111" stroke-width="1"/>
<rect x="139.5" y="620.5" width="9" height="3.0" fill="#ee1a78" stroke="#111" stroke-width="1"/>
<rect x="152.5" y="610.5" width="9" height="10.0" fill="#2a6af5" stroke="#111" stroke-width="1"/>
<rect x="164.5" y="620.5" width="9" height="13.0" fill="#ee1a78" stroke="#111" stroke-width="1"/>
<rect x="177.5" y="620.5" width="9" height="8.0" fill="#ee1a78" stroke="#111" stroke-width="1"/>
<rect x="189.5" y="620.5" width="9" height="3.0" fill="#ee1a78" stroke="#111" stroke-width="1"/>
<rect x="202.5" y="610.5" width="9" height="10.0" fill="#2a6af5" stroke="#111" stroke-width="1"/>
<rect x="214.5" y="591.5" width="9" height="29.0" fill="#2a6af5" stroke="#111" stroke-width="1"/>
<rect x="227.5" y="615.5" width="9" height="5.0" fill="#2a6af5" stroke="#111" stroke-width="1"/>
<rect x="239.5" y="615.5" width="9" height="5.0" fill="#2a6af5" stroke="#111" stroke-width="1"/>
<rect x="252.5" y="615.5" width="9" height="5.0" fill="#2a6af5" stroke="#111" stroke-width="1"/>
<rect x="264.5" y="600.5" width="9" height="20.0" fill="#2a6af5" stroke="#111" stroke-width="1"/>
<rect x="277.5" y="600.5" width="9" height="20.0" fill="#2a6af5" stroke="#111" stroke-width="1"/>
<rect x="289.5" y="620.5" width="9" height="13.0" fill="#ee1a78" stroke="#111" stroke-width="1"/>
<rect x="302.5" y="620.5" width="9" height="8.0" fill="#ee1a78" stroke="#111" stroke-width="1"/>
<rect x="314.5" y="596.5" width="9" height="24.0" fill="#2a6af5" stroke="#111" stroke-width="1"/>
<rect x="327.5" y="620.5" width="9" height="3.0" fill="#ee1a78" stroke="#111" stroke-width="1"/>
<rect x="339.5" y="615.5" width="9" height="5.0" fill="#2a6af5" stroke="#111" stroke-width="1"/>
<rect x="352.5" y="620.5" width="9" height="13.0" fill="#ee1a78" stroke="#111" stroke-width="1"/>
<rect x="364.5" y="620.5" width="9" height="3.0" fill="#ee1a78" stroke="#111" stroke-width="1"/>
<rect x="377.5" y="620.5" width="9" height="8.0" fill="#ee1a78" stroke="#111" stroke-width="1"/>
<rect x="389.5" y="600.5" width="9" height="20.0" fill="#2a6af5" stroke="#111" stroke-width="1"/>
<rect x="402.5" y="620.5" width="9" height="18.0" fill="#ee1a78" stroke="#111" stroke-width="1"/>
<rect x="414.5" y="605.5" width="9" height="15.0" fill="#2a6af5" stroke="#111" stroke-width="1"/>
<rect x="427.5" y="605.5" width="9" height="15.0" fill="#2a6af5" stroke="#111" stroke-width="1"/>
<rect x="439.5" y="610.5" width="9" height="10.0" fill="#2a6af5" stroke="#111" stroke-width="1"/>
<rect x="452.5" y="605.5" width="9" height="15.0" fill="#2a6af5" stroke="#111" stroke-width="1"/>
<rect x="464.5" y="600.5" width="9" height="20.0" fill="#2a6af5" stroke="#111" stroke-width="1"/>
<rect x="477.5" y="620.5" width="9" height="13.0" fill="#ee1a78" stroke="#111" stroke-width="1"/>
<rect x="489.5" y="620.5" width="9" height="13.0" fill="#ee1a78" stroke="#111" stroke-width="1"/>
<rect x="501.5" y="620.5" width="9" height="8.0" fill="#ee1a78" stroke="#111" stroke-width="1"/>
<rect x="514.5" y="610.5" width="9" height="10.0" fill="#2a6af5" stroke="#111" stroke-width="1"/>
<rect x="526.5" y="620.5" width="9" height="3.0" fill="#ee1a78" stroke="#111" stroke-width="1"/>
<rect x="539.5" y="615.5" width="9" height="5.0" fill="#2a6af5" stroke="#111" stroke-width="1"/>
<rect x="551.5" y="620.5" width="9" height="3.0" fill="#ee1a78" stroke="#111" stroke-width="1"/>
<rect x="564.5" y="620.5" width="9" height="13.0" fill="#ee1a78" stroke="#111" stroke-width="1"/>
<rect x="576.5" y="620.5" width="9" height="13.0" fill="#ee1a78" stroke="#111" stroke-width="1"/>
<rect x="589.5" y="615.5" width="9" height="5.0" fill="#2a6af5" stroke="#111" stroke-width="1"/>
<rect x="601.5" y="605.5" width="9" height="15.0" fill="#2a6af5" stroke="#111" stroke-width="1"/>
<rect x="614.5" y="615.5" width="9" height="5.0" fill="#2a6af5" stroke="#111" stroke-width="1"/>
<rect x="626.5" y="615.5" width="9" height="5.0" fill="#2a6af5" stroke="#111" stroke-width="1"/>
<rect x="639.5" y="620.5" width="9" height="3.0" fill="#ee1a78" stroke="#111" stroke-width="1"/>
<rect x="651.5" y="610.5" width="9" height="10.0" fill="#2a6af5" stroke="#111" stroke-width="1"/>
<rect x="664.5" y="620.5" width="9" height="8.0" fill="#ee1a78" stroke="#111" stroke-width="1"/>
<rect x="676.5" y="605.5" width="9" height="15.0" fill="#2a6af5" stroke="#111" stroke-width="1"/>
<rect x="689.5" y="610.5" width="9" height="10.0" fill="#2a6af5" stroke="#111" stroke-width="1"/>
<rect x="701.5" y="620.5" width="9" height="3.0" fill="#ee1a78" stroke="#111" stroke-width="1"/>
<rect x="714.5" y="605.5" width="9" height="15.0" fill="#2a6af5" stroke="#111" stroke-width="1"/>
<rect x="726.5" y="591.5" width="9" height="29.0" fill="#2a6af5" stroke="#111" stroke-width="1"/>
<rect x="739.5" y="591.5" width="9" height="29.0" fill="#2a6af5" stroke="#111" stroke-width="1"/>
<rect x="751.5" y="615.5" width="9" height="5.0" fill="#2a6af5" stroke="#111" stroke-width="1"/>
<rect x="764.5" y="620.5" width="9" height="3.0" fill="#ee1a78" stroke="#111" stroke-width="1"/>
<rect x="776.5" y="620.5" width="9" height="3.0" fill="#ee1a78" stroke="#111" stroke-width="1"/>
<rect x="789.5" y="615.5" width="9" height="5.0" fill="#2a6af5" stroke="#111" stroke-width="1"/>
<rect x="801.5" y="620.5" width="9" height="8.0" fill="#ee1a78" stroke="#111" stroke-width="1"/>
<rect x="814.5" y="620.5" width="9" height="13.0" fill="#ee1a78" stroke="#111" stroke-width="1"/>
<rect x="826.5" y="620.5" width="9" height="3.0" fill="#ee1a78" stroke="#111" stroke-width="1"/>
<rect x="839.5" y="620.5" width="9" height="3.0" fill="#ee1a78" stroke="#111" stroke-width="1"/>
<rect x="851.5" y="605.5" width="9" height="15.0" fill="#2a6af5" stroke="#111" stroke-width="1"/>
<rect x="864.5" y="610.5" width="9" height="10.0" fill="#2a6af5" stroke="#111" stroke-width="1"/>
<rect x="876.5" y="605.5" width="9" height="15.0" fill="#2a6af5" stroke="#111" stroke-width="1"/>
<line x1="70" y1="620.5" x2="894" y2="620.5" stroke="#000" stroke-width="1"/>
<polyline points="70.5,616.0 220.0,616.0 232.5,614.8 245.0,613.8 258.0,613.6 270.0,611.8 283.0,609.5 295.5,612.7 308.0,616.0 445.0,616.0 457.0,613.7 469.8,609.6 482.0,613.4 495.0,615.7 500.0,616.0 569.4,616.0" fill="none" stroke="#2a9a10" stroke-width="2" stroke-linejoin="round"/>
<polyline points="581.5,625.8 594.0,616.0 713.0,616.0 722.0,614.2 733.0,610.0 746.0,605.7 757.0,605.7 770.0,608.8 783.0,613.0 796.5,615.8 800.0,616.0 882.8,616.0" fill="none" stroke="#2a9a10" stroke-width="2" stroke-linejoin="round"/>
<polyline points="569.4,616.0 581.5,625.8" fill="none" stroke="#f01010" stroke-width="2"/>
<text x="80" y="585" class="ttl" textLength="106.6" lengthAdjust="spacing">Indice Calidad Vela</text>
<text x="67.1" y="585" class="sm" text-anchor="end">10</text>
<text x="67.1" y="620" class="sm" text-anchor="end">0</text>
<text x="67.1" y="667.6" class="sm" text-anchor="end">-10</text>
<text x="897.2" y="581.0" class="ax" style="font-size:12.5px;fill:#000;stroke:#000">ICV</text>
<text x="897.2" y="592.2" class="ax" style="font-size:12.5px;fill:#000;stroke:#000">5, 3, 1</text>
<text x="899.0" y="605.3" class="ax" style="font-size:13px;fill:#1a1aff;stroke:#1a1aff">3</text>
<text x="899.0" y="614.7" class="ax" style="font-size:13px;fill:#1a1aff;stroke:#1a1aff">1</text>
<rect x="20.5" y="673.5" width="923" height="99.0" fill="#fff" stroke="#000" stroke-width="1"/>
<rect x="70.5" y="675.5" width="823" height="95.0" fill="#fff" stroke="#9a9a9a" stroke-width="1"/>
<path d="M94.5 676.0V771.0M132.5 676.0V771.0M169.5 676.0V771.0M207.5 676.0V771.0M244.5 676.0V771.0M282.5 676.0V771.0M319.5 676.0V771.0M357.5 676.0V771.0M394.5 676.0V771.0M432.5 676.0V771.0M469.5 676.0V771.0M506.5 676.0V771.0M544.5 676.0V771.0M581.5 676.0V771.0M619.5 676.0V771.0M656.5 676.0V771.0M669.5 676.0V771.0M706.5 676.0V771.0M744.5 676.0V771.0M781.5 676.0V771.0M819.5 676.0V771.0M856.5 676.0V771.0" stroke="#8a8a8a" stroke-width="1" stroke-dasharray="3 3" stroke-dashoffset="3" fill="none"/>
<line x1="70" y1="713.5" x2="896" y2="713.5" stroke="#f00808" stroke-width="1" stroke-dasharray="3 3"/>
<line x1="70" y1="732.5" x2="896" y2="732.5" stroke="#0a6a00" stroke-width="1" stroke-dasharray="3 3"/>
<polyline points="70.5,684.0 84.0,686.6 100.0,689.8 116.0,691.4 132.0,691.7 148.0,692.6 167.2,694.9 186.4,698.4 207.2,702.6 220.0,705.4 232.8,706.7 244.0,705.8 256.8,703.8 269.6,700.3 282.4,695.8 295.2,691.4 308.0,688.2 320.8,686.9 344.4,686.6 370.0,688.8 394.0,693.0 419.6,699.0 432.4,701.3 458.0,703.2 469.8,701.9 483.0,699.0 506.6,697.8 520.4,699.4 531.6,703.8 544.4,709.0 557.2,715.4 569.4,720.8 582.8,725.6 606.8,733.6 619.6,738.4 634.0,743.8 642.8,746.4 655.6,748.6 670.0,749.6 682.8,748.0 695.6,746.0 706.8,743.8 719.6,741.0 731.8,737.4 744.6,732.0 757.4,722.4 769.8,714.4 783.0,705.8 794.8,700.0 807.6,696.2 819.4,693.6 832.2,695.8 844.4,700.0 857.2,705.8 869.4,710.2 882.8,712.2" fill="none" stroke="#c4c4c4" stroke-width="2" stroke-dasharray="5 2"/>
<polyline points="70.5,688.8 82.4,689.8 95.2,692.0 108.0,694.2 120.8,692.6 132.0,692.6 144.8,694.2 157.6,697.4 170.4,701.6 183.2,705.8 194.4,709.0 207.2,710.9 220.0,709.6 232.8,704.8 244.0,697.4 256.8,692.6 269.6,688.2 282.4,685.9 295.2,683.7 308.0,685.0 320.8,687.8 332.0,690.7 344.4,688.8 357.2,689.8 370.0,691.0 382.8,698.7 394.0,700.6 408.4,706.1 419.6,704.8 432.4,707.0 445.2,703.2 458.0,699.0 469.8,691.0 483.0,691.0 494.8,696.2 506.6,708.3" fill="none" stroke="#2a9a10" stroke-width="2" stroke-linejoin="round"/>
<polyline points="506.6,708.3 520.4,717.9 531.6,724.0 544.4,724.0 557.2,725.0 569.4,725.9" fill="none" stroke="#2a1a8a" stroke-width="2" stroke-linejoin="round"/>
<polyline points="569.4,725.9 582.8,734.2 606.8,750.9 619.6,752.2 634.0,750.9 655.6,749.0 670.0,746.7 682.8,743.8 695.6,742.6 706.8,737.4" fill="none" stroke="#f01010" stroke-width="2" stroke-linejoin="round"/>
<polyline points="706.8,737.4 719.6,732.0 731.8,720.8" fill="none" stroke="#2a1a8a" stroke-width="2" stroke-linejoin="round"/>
<polyline points="731.8,720.8 744.6,709.0 757.4,695.8 769.8,689.8 783.0,691.0 794.8,693.0 807.6,695.8 819.4,699.4 832.2,708.0" fill="none" stroke="#2a9a10" stroke-width="2" stroke-linejoin="round"/>
<polyline points="832.2,708.0 844.4,717.6 857.2,722.1 869.4,719.8" fill="none" stroke="#2a1a8a" stroke-width="2" stroke-linejoin="round"/>
<polyline points="869.4,719.8 882.8,711.5" fill="none" stroke="#2a9a10" stroke-width="2" stroke-linejoin="round"/>
<text x="80.6" y="688" class="ttl" textLength="87.2" lengthAdjust="spacing">Full Estocastico</text>
<text x="67.1" y="687.8" class="sm" text-anchor="end">100</text>
<text x="67.1" y="713.2" class="sm" text-anchor="end">60</text>
<text x="67.1" y="732.0" class="sm" text-anchor="end">40</text>
<text x="67.1" y="770.8" class="sm" text-anchor="end">0</text>
<text x="897.2" y="683.9" class="ax" style="font-size:12.5px" textLength="39" lengthAdjust="spacingAndGlyphs">EST. %</text>
<text x="897.2" y="694.7" class="ax" style="font-size:12.5px" textLength="28.4" lengthAdjust="spacingAndGlyphs">FULL</text>
<text x="897.2" y="705.5" class="ax" style="font-size:12.5px" textLength="43.6" lengthAdjust="spacingAndGlyphs">(28,3,6)</text>
<text x="20" y="789.5" class="ax" style="font-size:13px">IAG (IAG.MC)</text>
<text x="306" y="789.5" class="ax" style="font-size:13.4px;fill:#1515f0;stroke:#1515f0" textLength="575.5" lengthAdjust="spacing">/Users/mserra/Library/CloudStorage/Dropbox/WorkDB/DatosBolsa/Configs/Config.DEFAULT.xml</text>
<rect x="919.5" y="777" width="66" height="17" fill="#ee0a0a" stroke="#b4b4b4" stroke-width="1"/>
<text x="923.2" y="789.9" class="ax" style="font-size:12px;fill:#fff;stroke:#fff" textLength="22.6" lengthAdjust="spacingAndGlyphs">OFF</text>
<defs>
<linearGradient id="bg" x1="0" y1="0" x2="0" y2="1"><stop offset="0" stop-color="#f4f4f4"/><stop offset="1" stop-color="#e9e9e9"/></linearGradient>
<radialGradient id="hg" cx=".5" cy=".35" r=".7"><stop offset="0" stop-color="#4a4ad8"/><stop offset=".6" stop-color="#1c1ca8"/><stop offset="1" stop-color="#0c0c70"/></radialGradient>
<radialGradient id="rd" cx=".5" cy=".5" r=".5"><stop offset="0" stop-color="#ffe0e0"/><stop offset=".35" stop-color="#ff7880"/><stop offset=".8" stop-color="#f81828"/><stop offset="1" stop-color="#f00818"/></radialGradient>
<linearGradient id="tr" x1="0" y1="0" x2="1" y2="0"><stop offset="0" stop-color="#5e5e5e"/><stop offset=".45" stop-color="#9a9a9a"/><stop offset="1" stop-color="#444"/></linearGradient>
<linearGradient id="gr" x1="0" y1="0" x2="0" y2="1"><stop offset="0" stop-color="#9ce070"/><stop offset="1" stop-color="#44a824"/></linearGradient>
<linearGradient id="gy" x1="0" y1="0" x2="1" y2="1"><stop offset="0" stop-color="#bdbdbd"/><stop offset="1" stop-color="#6a6a6a"/></linearGradient>
</defs>
<circle cx="968.5" cy="22.0" r="6.4" fill="#fff" stroke="#c2c2c2" stroke-width="1"/>
<rect x="953.5" y="36.5" width="32" height="21" fill="url(#bg)" stroke="#adadad" stroke-width="1"/>
<rect x="953.5" y="85.5" width="32" height="21" fill="url(#bg)" stroke="#adadad" stroke-width="1"/>
<rect x="953.5" y="110.5" width="32" height="21" fill="url(#bg)" stroke="#adadad" stroke-width="1"/>
<rect x="953.5" y="135.5" width="32" height="21" fill="url(#bg)" stroke="#adadad" stroke-width="1"/>
<rect x="953.5" y="160.5" width="32" height="21" fill="url(#bg)" stroke="#adadad" stroke-width="1"/>
<rect x="953.5" y="185.5" width="32" height="21" fill="url(#bg)" stroke="#adadad" stroke-width="1"/>
<rect x="953.5" y="210.5" width="32" height="21" fill="url(#bg)" stroke="#adadad" stroke-width="1"/>
<rect x="953.5" y="235.5" width="32" height="21" fill="url(#bg)" stroke="#adadad" stroke-width="1"/>
<rect x="953.5" y="260.5" width="32" height="21" fill="url(#bg)" stroke="#adadad" stroke-width="1"/>
<rect x="953.5" y="285.5" width="32" height="21" fill="#ececec"/>
<path d="M956.5 285.5h-3v21h3M982.5 285.5h3v21h-3" fill="none" stroke="#a9a9a9" stroke-width="1"/>
<rect x="953.5" y="311.5" width="32" height="21" fill="#ececec"/>
<path d="M956.5 311.5h-3v21h3M982.5 311.5h3v21h-3" fill="none" stroke="#a9a9a9" stroke-width="1"/>
<rect x="953.5" y="335.5" width="32" height="21" fill="url(#bg)" stroke="#adadad" stroke-width="1"/>
<rect x="953.5" y="361.5" width="32" height="21" fill="url(#bg)" stroke="#adadad" stroke-width="1"/>
<rect x="953.5" y="385.5" width="32" height="21" fill="url(#bg)" stroke="#adadad" stroke-width="1"/>
<rect x="953.5" y="408.5" width="32" height="21" fill="url(#bg)" stroke="#adadad" stroke-width="1"/>
<rect x="961" y="39.0" width="16" height="15" fill="#f2f2f2" opacity=".7"/>
<circle cx="966.5" cy="44.5" r="4.2" fill="#cfcfcf" stroke="#2a2a2a" stroke-width="1.4"/><circle cx="965.6" cy="43.4" r="1.8" fill="#f4f4f4"/><line x1="969.6" y1="48.1" x2="975.3" y2="53.4" stroke="#222" stroke-width="2.1" stroke-linecap="round"/>
<rect x="953.5" y="61.5" width="31" height="21" fill="#fcf2f4" stroke="#b9b9c4" stroke-width="1"/>
<path d="M957.5 61v21M972 61v21M983.500 61v21" stroke="#cfd0e2" stroke-width="1.2"/>
<polygon points="954.8,82.5 954.8,63.0 956.0,64.5 958.0,68.0 959.5,67.0 961.0,72.0 962.5,78.5 964.5,79.0 966.5,70.0 967.8,65.0 969.0,72.0 970.5,80.0 972.0,82.5" fill="#4a4aa6"/>
<polygon points="977.5,82.5 979.0,77.0 981.0,72.0 982.5,76.0 983.2,82.5" fill="#4a4aa6"/>
<rect x="954" y="81.200" width="30" height="1.300" fill="#5a5ab8"/>
<polyline points="954.8,67.5 958.0,69.5 960.5,69.2 968.0,68.5 969.5,66.5 970.5,68.5 973.0,69.0 974.2,68.0 976.5,72.5 978.5,68.5 982.0,68.5 983.0,69.5" fill="none" stroke="#e01212" stroke-width="1.2" stroke-linejoin="round"/>
<line x1="957.2" y1="95.3" x2="980.8" y2="95.3" stroke="#ee2c2c" stroke-width="2.4"/>
<line x1="957.2" y1="120.3" x2="980.8" y2="120.3" stroke="#2222f6" stroke-width="2.4"/>
<path d="M957.5 151.300L973 135.500M965.200 156.500L980.500 140.800" stroke="#333" stroke-width="1.100" fill="none"/>
<polyline points="962.8,146.500 965.2,156.200 969.100,143.300 971.500,150 974.200,137 976,144.800" fill="none" stroke="#3c3ce8" stroke-width="1.100" stroke-linejoin="round"/>
<path d="M974.200 137L979.800 140.800" stroke="#3c3ce8" stroke-width="1.100"/>
<line x1="958.5" y1="181.5" x2="980" y2="160.0" stroke="#1a1a1a" stroke-width="1.7"/>
<polyline points="973.8,160.5 972.5,167.5 978.8,166.3" fill="none" stroke="#2a2af0" stroke-width="1.600" stroke-linejoin="miter"/>
<polyline points="961,173.7 967.3,173.3 966,179.2" fill="none" stroke="#2a2af0" stroke-width="1.600" stroke-linejoin="miter"/>
<line x1="958.5" y1="206.5" x2="980" y2="185.0" stroke="#1a1a1a" stroke-width="1.7"/>
<polyline points="973.8,185.5 972.5,192.5 978.8,191.3" fill="none" stroke="#2a2af0" stroke-width="1.600" stroke-linejoin="miter"/>
<polyline points="961,198.7 967.3,198.3 966,204.2" fill="none" stroke="#2a2af0" stroke-width="1.600" stroke-linejoin="miter"/>
<text x="958.2" y="196.8" style="font:bold 11px 'Liberation Sans',sans-serif;fill:#ee1020">Σ</text>
<path d="M967.9 215.0h3.2v2.8h3.1L969.5 225.8L964.8 217.8h3.1z" fill="#f01a08"/>
<path d="M967.8 250.8h3.4v-2.8h3.1L969.5 239.8L964.6 248.0h3.1z" fill="#0a0aff"/>
<path d="M957.200 269.300h3v-3.300h2.800v3.300h3v2.900h-3v3.300h-2.800v-3.300h-3z" fill="#a8c890" stroke="#62aa22" stroke-width=".9"/>
<path d="M970.5 266.2h4.0v3.3h3.5L972.5 276.0L967.0 269.5h3.5z" fill="#e8180c"/>
<circle cx="981" cy="275" r="2.300" fill="#fff" stroke="#e8180c" stroke-width=".9"/>
<path d="M957 292.0h7M966 292.0h7M975 292.0h6" stroke="#3a3a3a" stroke-width="2" fill="none"/>
<path d="M957 296.8h7M966 296.8h7M975 296.8h6" stroke="#3a3a3a" stroke-width="2" fill="none"/>
<path d="M957 301.8h7M966 301.8h7M975 301.8h6" stroke="#3a3a3a" stroke-width="2" fill="none"/>
<path d="M956 313.200h16M956 330.500h16M963.800 314v16" stroke="#1212f6" stroke-width="1.300" fill="none"/>
<path d="M963.800 313.800l-3.500 3.500h7zM963.800 330l-3.500-3.500h7z" fill="#1212f6"/>
<text x="973.200" y="329.800" style="font:19px 'Liberation Sans',sans-serif;fill:#111" textLength="8" lengthAdjust="spacingAndGlyphs">%</text>
<path d="M958.500 340.5h12.500" stroke="#2a6af5" stroke-width="1.2"/><path d="M958.500 346.2h12.500" stroke="#1a1a1a" stroke-width="1.7"/><path d="M958.500 351.8h12.500" stroke="#f04a3a" stroke-width="2"/>
<text x="973" y="353.5" style="font:19px 'Liberation Sans',sans-serif;fill:#111" textLength="8.200" lengthAdjust="spacingAndGlyphs">%</text>
<rect x="960" y="362" width="18.500" height="20" fill="#dddde8"/>
<circle cx="969.500" cy="371.800" r="7.600" fill="#e4d4da" stroke="#c22424" stroke-width="2.300"/><line x1="964.200" y1="366.500" x2="974.800" y2="377.100" stroke="#c22424" stroke-width="2.300"/>
<path d="M963 368a7.600 7.600 0 0 1 13 0" stroke="#e88" stroke-width="1" fill="none" opacity=".8"/>
<circle cx="969" cy="395.800" r="6" fill="url(#rd)"/>
<path d="M963.200 416.500c1.500-3.500 5.500-4.800 8.800-3.200l.8-2 2.700 5-5.600 1 .9-1.900c-2.200-.8-4.300-.2-5.300 1.600z" fill="#2a62dc"/>
<path d="M974.800 421c-1.500 3.500-5.500 4.800-8.800 3.200l-.8 2-2.700-5 5.600-1-.9 1.900c2.200.8 4.300.2 5.300-1.600z" fill="#2a62dc"/>
<circle cx="968.5" cy="472.8" r="6.4" fill="#fff" stroke="#c2c2c2" stroke-width="1"/>
<rect x="953.5" y="487.5" width="32" height="21" fill="#fff" stroke="#b4b4b4" stroke-width="1"/>
<rect x="953.5" y="513.5" width="32" height="21" fill="url(#bg)" stroke="#adadad" stroke-width="1"/>
<rect x="953.5" y="541.5" width="32" height="21" fill="url(#bg)" stroke="#adadad" stroke-width="1"/>
<path d="M961.8 492.9h3.2v2.9h4.0L963.4 502.4L957.8 495.8h4.0z" fill="#e0281a"/>
<path d="M974.7 502.1h3.8v-3.3h3.6L976.6 492.6L971.1 498.8h3.6z" fill="#6ab42a"/>
<path d="M958.500 518.0h12.500" stroke="#2a6af5" stroke-width="1.2"/><path d="M958.500 523.7h12.500" stroke="#1a1a1a" stroke-width="1.7"/><path d="M958.500 529.3h12.500" stroke="#f04a3a" stroke-width="2"/>
<text x="973" y="531.0" style="font:19px 'Liberation Sans',sans-serif;fill:#111" textLength="8.200" lengthAdjust="spacingAndGlyphs">%</text>
<path d="M957.800 555.4h25" stroke="#2a9a2a" stroke-width="1" stroke-dasharray="2.500 2"/>
<path d="M977.500 558.4v2" stroke="#7070e0" stroke-width="1"/>
<path d="M955.500 545.5C960 548.0 964 555.0 967.400 559.6C970 557.0 974 549.0 977.100 541.6" stroke="#1a1af0" stroke-width="2" fill="none"/>
<path d="M955.200 545.0C961 547.0 966 552.0 969.700 556.8C974 553.5 978 547.5 980.800 541.6" stroke="#e21c1c" stroke-width="2" fill="none"/>
<circle cx="968.4" cy="579.8" r="7.1" fill="#2f78f6"/><circle cx="968.4" cy="579.8" r="2.9" fill="#fff"/>
<rect x="953.5" y="595.5" width="32" height="21" fill="#fff" stroke="#b4b4b4" stroke-width="1"/>
<rect x="953.5" y="619.5" width="32" height="21" fill="url(#bg)" stroke="#adadad" stroke-width="1"/>
<rect x="953.5" y="643.5" width="32" height="21" fill="url(#bg)" stroke="#adadad" stroke-width="1"/>
<path d="M961.8 600.9h3.2v2.9h4.0L963.4 610.4L957.8 603.8h4.0z" fill="#e0281a"/>
<path d="M974.7 610.1h3.8v-3.3h3.6L976.6 600.6L971.1 606.8h3.6z" fill="#6ab42a"/>
<path d="M958.500 624.0h12.500" stroke="#2a6af5" stroke-width="1.2"/><path d="M958.500 629.7h12.500" stroke="#1a1a1a" stroke-width="1.7"/><path d="M958.500 635.3h12.500" stroke="#f04a3a" stroke-width="2"/>
<text x="973" y="637.0" style="font:19px 'Liberation Sans',sans-serif;fill:#111" textLength="8.200" lengthAdjust="spacingAndGlyphs">%</text>
<path d="M957.800 657.4h25" stroke="#2a9a2a" stroke-width="1" stroke-dasharray="2.500 2"/>
<path d="M977.500 660.4v2" stroke="#7070e0" stroke-width="1"/>
<path d="M955.500 647.5C960 650.0 964 657.0 967.400 661.6C970 659.0 974 651.0 977.100 643.6" stroke="#1a1af0" stroke-width="2" fill="none"/>
<path d="M955.200 647.0C961 649.0 966 654.0 969.700 658.8C974 655.5 978 649.5 980.800 643.6" stroke="#e21c1c" stroke-width="2" fill="none"/>
<circle cx="968.5" cy="682.7" r="6.4" fill="#fff" stroke="#c2c2c2" stroke-width="1"/>
<rect x="953.5" y="697.5" width="32" height="21" fill="#fff" stroke="#b4b4b4" stroke-width="1"/>
<rect x="953.5" y="722.5" width="32" height="21" fill="url(#bg)" stroke="#adadad" stroke-width="1"/>
<rect x="953.5" y="747.5" width="32" height="21" fill="url(#bg)" stroke="#adadad" stroke-width="1"/>
<path d="M961.8 702.9h3.2v2.9h4.0L963.4 712.4L957.8 705.8h4.0z" fill="#e0281a"/>
<path d="M974.7 712.1h3.8v-3.3h3.6L976.6 702.6L971.1 708.8h3.6z" fill="#6ab42a"/>
<path d="M958.500 727.0h12.500" stroke="#2a6af5" stroke-width="1.2"/><path d="M958.500 732.7h12.500" stroke="#1a1a1a" stroke-width="1.7"/><path d="M958.500 738.3h12.500" stroke="#f04a3a" stroke-width="2"/>
<text x="973" y="740.0" style="font:19px 'Liberation Sans',sans-serif;fill:#111" textLength="8.200" lengthAdjust="spacingAndGlyphs">%</text>
<path d="M957.800 761.4h25" stroke="#2a9a2a" stroke-width="1" stroke-dasharray="2.500 2"/>
<path d="M977.500 764.4v2" stroke="#7070e0" stroke-width="1"/>
<path d="M955.500 751.5C960 754.0 964 761.0 967.400 765.6C970 763.0 974 755.0 977.100 747.6" stroke="#1a1af0" stroke-width="2" fill="none"/>
<path d="M955.200 751.0C961 753.0 966 758.0 969.700 762.8C974 759.5 978 753.5 980.800 747.6" stroke="#e21c1c" stroke-width="2" fill="none"/>
<defs>
<radialGradient id="fl" cx=".5" cy=".5" r=".5"><stop offset="0" stop-color="#fffff4" stop-opacity=".95"/><stop offset=".6" stop-color="#ffffe6" stop-opacity=".85"/><stop offset=".9" stop-color="#f6f6c0" stop-opacity=".55"/><stop offset="1" stop-color="#e8e8a0" stop-opacity="0"/></radialGradient>
<linearGradient id="cam" x1="0" y1="0" x2="0" y2="1"><stop offset="0" stop-color="#a8a8a8"/><stop offset="1" stop-color="#5c5c5c"/></linearGradient>
<linearGradient id="slv" x1="0" y1="0" x2="1" y2="1"><stop offset="0" stop-color="#fafafa"/><stop offset=".5" stop-color="#c4c4c4"/><stop offset="1" stop-color="#8a8a8a"/></linearGradient>
<radialGradient id="dg" cx=".6" cy=".35" r=".75"><stop offset="0" stop-color="#6ab03a"/><stop offset="1" stop-color="#24580e"/></radialGradient>
<linearGradient id="flp" x1="0" y1="0" x2="1" y2="1"><stop offset="0" stop-color="#eef6ff"/><stop offset="1" stop-color="#b8d0f4"/></linearGradient>
<radialGradient id="gear" cx=".4" cy=".35" r=".75"><stop offset="0" stop-color="#c8c8c8"/><stop offset=".6" stop-color="#8c8c8c"/><stop offset="1" stop-color="#5a5a5a"/></radialGradient>
</defs>
<circle cx="174.2" cy="21.3" r="11.4" fill="url(#hg)" stroke="#9494ea" stroke-width="1.5"/>
<text x="174.2" y="28.2" text-anchor="middle" style="font:bold 19.5px 'Liberation Sans',sans-serif;fill:#e6e2ff">?</text>
<path d="M405.200 12.400h17.800" stroke="#b4b4b4" stroke-width="1"/>
<rect x="405" y="13.700" width="18" height="4" fill="#0a0a0a"/><path d="M409.500 15.700h2l.8-.8h1.500l.8 1.200h1.200l.8-1h1.500" stroke="#20c820" stroke-width="1" fill="none"/>
<rect x="405.400" y="19.700" width="17.200" height="9" fill="#fff" stroke="#1a1a1a" stroke-width="1"/>
<path d="M408.200 23.400l1.800 2.100 4.200-4.200 1.500 1.200" stroke="#1a1af0" stroke-width="1.100" fill="none"/>
<path d="M404 30.400h19.800" stroke="#b4b4b4" stroke-width="1.100"/>
<path d="M587.200 10.200L590.700 29.500C591.200 33.200 603.500 33.200 604 29.500L607 10.200z" fill="url(#tr)"/>
<path d="M589.300 21.500c3 3.500 11.500 4 16-.5l-1.300 8.500c-.5 3.700-12.800 3.700-13.300 0z" fill="#2a2a2a" opacity=".45"/>
<ellipse cx="597.100" cy="10" rx="9.900" ry="2.700" fill="#3c3c3c" stroke="#8a8a8a" stroke-width=".9"/>
<path d="M592.500 27c1.500 2.500 6 3 8 1.500" stroke="#9a9a9a" stroke-width="1" fill="none" opacity=".7"/>
<rect x="623.500" y="7.300" width="19.500" height="26.200" rx="1" fill="#c9dafb" stroke="#86a6f0" stroke-width="1"/>
<path d="M644.500 12.500C636 17 628 23.500 622 29.500" stroke="#7a0404" stroke-width="6.200" fill="none" stroke-linecap="round"/>
<path d="M627.800 10.500C631 15 637 22 644 28.200" stroke="#7a0404" stroke-width="6.200" fill="none" stroke-linecap="round"/>
<path d="M644.500 12.500C636 17 628 23.500 622 29.500" stroke="#cc1212" stroke-width="4.600" fill="none" stroke-linecap="round"/>
<path d="M627.800 10.500C631 15 637 22 644 28.200" stroke="#cc1212" stroke-width="4.600" fill="none" stroke-linecap="round"/>
<path d="M627.500 9.800C630 13 633 16.500 635.500 19" stroke="#f07070" stroke-width="1.200" fill="none" stroke-linecap="round" opacity=".8"/>
<path d="M658 14.700v-1.700h5.500v1.700" fill="#8a8a8a" stroke="#5a5a5a" stroke-width=".8"/>
<rect x="656.200" y="14.700" width="22.800" height="17.400" rx="1.500" fill="url(#cam)" stroke="#4a4a4a" stroke-width="1"/>
<rect x="657" y="18.500" width="5.500" height="12.500" fill="#6e6e6e"/>
<rect x="657" y="30" width="21.500" height="1.800" fill="#d0d0d0"/>
<circle cx="671.300" cy="25.700" r="5.200" fill="#e8e8e8" stroke="#3a3a3a" stroke-width="1.100"/><circle cx="671.300" cy="25.700" r="3" fill="#6a7a4a" stroke="#333" stroke-width=".8"/><circle cx="671.300" cy="25" r="1.300" fill="#c8d8a0"/>
<circle cx="672.400" cy="16.300" r="10.500" fill="url(#fl)"/><circle cx="672.400" cy="16.300" r="9.300" fill="none" stroke="#e6e6b0" stroke-width=".9" opacity=".8"/>
<rect x="668.200" y="15" width="7.500" height="3.600" rx=".8" fill="#fafafa" stroke="#7a7a7a" stroke-width=".8"/>
<path d="M694.200 11h20.600v20.600h-18.600l-2-2z" fill="#2c3cd8" stroke="#1c2494" stroke-width="1"/>
<rect x="698" y="11.500" width="13" height="10.300" fill="url(#flp)"/><rect x="699.500" y="25" width="10.200" height="6.600" fill="#c8c8c8"/><rect x="701" y="26.300" width="3" height="5.300" fill="#2c3cd8"/><rect x="712.300" y="12" width="1.600" height="1.600" fill="#fff"/>
<path d="M729.500 14.500h6.500l1.500 2h9.500v4h-13.500l-4 8.500z" fill="#f6e4c0" stroke="#c8965a" stroke-width="1"/><path d="M729.700 29.500l4.300-9h16.200l-4.500 9z" fill="#fdf3dc" stroke="#c8965a" stroke-width="1"/>
<path d="M763.77 18.27A11.10 11.10 0 0 1 783.45 13.37L784.71 12.38L783.75 19.25L779.03 16.81L780.29 15.83A7.10 7.10 0 0 0 767.71 18.97zM785.63 22.13A11.10 11.10 0 0 1 765.95 27.03L764.69 28.02L765.65 21.15L770.37 23.59L769.11 24.57A7.10 7.10 0 0 0 781.69 21.43z" fill="url(#gr)" stroke="#3c9a22" stroke-width=".7" stroke-linejoin="round"/>
<ellipse cx="809" cy="31.300" rx="12.800" ry="1.500" fill="#1c1c1c"/>
<circle cx="811.600" cy="20.200" r="11" fill="url(#dg)"/>
<text x="812" y="31.600" text-anchor="middle" transform="rotate(8 812 20)" style="font:bold 31px 'Liberation Sans',sans-serif;fill:#f0f0ec;stroke:#a8a8a0;stroke-width:.6">S</text>
<g transform="rotate(-20 844 21)"><text x="845.600" y="34.300" text-anchor="middle" style="font:bold 34px 'Liberation Sans',sans-serif;fill:#444">€</text>
<text x="844.200" y="32.800" text-anchor="middle" style="font:bold 34px 'Liberation Sans',sans-serif;fill:url(#slv);stroke:#6a6a6a;stroke-width:.7">€</text></g>
<polygon points="892.0,23.2 890.3,27.5 887.3,26.8 885.3,28.8 886.0,31.7 881.8,33.5 880.2,30.9 877.3,30.9 875.7,33.5 871.5,31.7 872.2,28.8 870.2,26.8 867.2,27.5 865.5,23.2 868.0,21.6 868.0,18.8 865.5,17.2 867.2,12.9 870.2,13.6 872.2,11.6 871.5,8.7 875.7,6.9 877.3,9.5 880.2,9.5 881.8,6.9 886.0,8.7 885.3,11.6 887.3,13.6 890.3,12.9 892.0,17.2 889.5,18.8 889.5,21.6" fill="url(#gear)" stroke="#6c6c6c" stroke-width="1.500" stroke-linejoin="round"/>
<circle cx="878.750" cy="20.200" r="5.300" fill="#d4d4d4" stroke="#8a8a8a" stroke-width=".8"/><circle cx="878.750" cy="20.200" r="2.100" fill="#fff" stroke="#777" stroke-width=".7"/>
<g transform="rotate(-7 913.500 21)"><rect x="903" y="10.200" width="21" height="21" rx="1.500" fill="#fdfdfd" stroke="#6a6a6a" stroke-width="1"/><path d="M903.500 10.700h20v4.800h-20z" fill="#6cc024"/><path d="M903.500 30.700h20" stroke="#bbb" stroke-width="1"/>
<text x="913.500" y="28" text-anchor="middle" style="font:bold 11.500px 'Liberation Sans',sans-serif;fill:#2a2a2a">17</text></g>
</svg>

<div class="sel" style="left:19px;width:135px">CandleSticks<i><svg width="16" height="16" viewBox="0 0 16 16"><path d="M4.900 6.400l2.900-2.800 2.900 2.800M4.900 9.600l2.900 2.800 2.900-2.800" stroke="#fff" stroke-width="1.400" fill="none" stroke-linecap="round" stroke-linejoin="round"/></svg></i></div>
<div class="sel" style="left:195px;width:96px">3 mesos<i><svg width="16" height="16" viewBox="0 0 16 16"><path d="M4.900 6.400l2.900-2.800 2.900 2.800M4.900 9.600l2.900 2.800 2.900-2.800" stroke="#fff" stroke-width="1.400" fill="none" stroke-linecap="round" stroke-linejoin="round"/></svg></i></div>
<div class="sel" style="left:304px;width:91px">dia<i><svg width="16" height="16" viewBox="0 0 16 16"><path d="M4.900 6.400l2.900-2.800 2.900 2.800M4.900 9.600l2.900 2.800 2.900-2.800" stroke="#fff" stroke-width="1.400" fill="none" stroke-linecap="round" stroke-linejoin="round"/></svg></i></div>
<div class="cb on" style="left:435px"><svg width="14" height="14" viewBox="0 0 14 14" style="position:static"><path d="M3 8.100l3 3 5-7.500" stroke="#fff" stroke-width="1.800" fill="none" stroke-linecap="round" stroke-linejoin="round"/></svg></div>
<div class="lbl" style="left:454.300px">Guies</div>
<div class="cb off" style="left:505px"></div>
<div class="lbl" style="left:524px">Cursor</div>

</body></html>
